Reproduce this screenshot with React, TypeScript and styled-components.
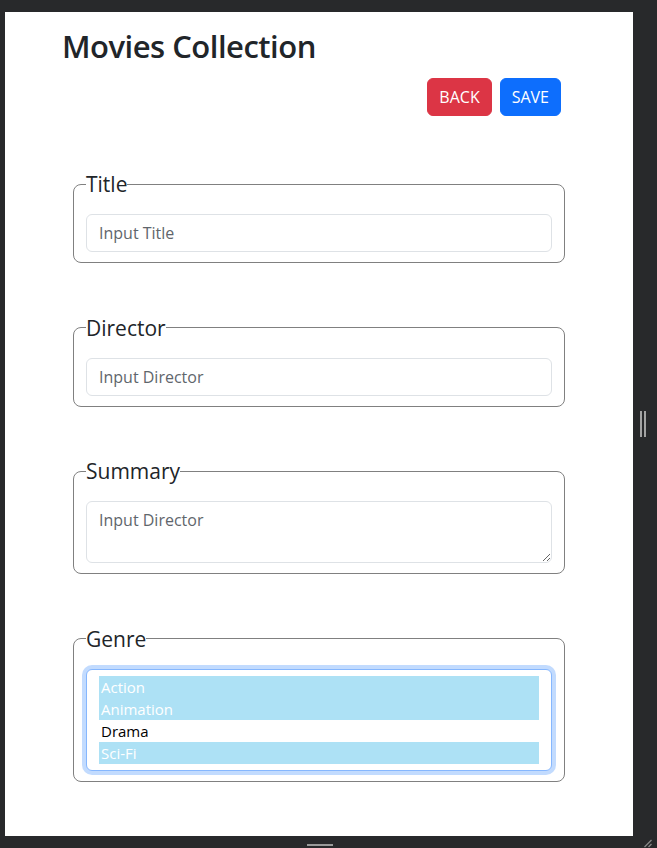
import React from "react";
import styled, { createGlobalStyle } from "styled-components";

const Global = createGlobalStyle`
  html, body { margin: 0; padding: 0; background: #28292b; }
  body { font-family: "Open Sans", "Noto Sans", sans-serif; color: #212529; }
  *, *::before, *::after { box-sizing: border-box; }
`;

const Frame = styled.div`
  width: 657px;
  height: 848px;
  background: #28292b;
  padding: 12px 0 0 5px;
  display: grid;
  grid-template-columns: 628px 1fr;
  grid-template-rows: 824px 1fr;
  overflow: hidden;
`;

const Page = styled.main`
  background: #fff;
  padding-top: 15px;
  display: flex;
  flex-direction: column;
`;

const Title = styled.h1`
  margin: 0;
  padding-left: 57px;
  font-size: 31px;
  font-weight: 600;
  letter-spacing: -0.5px;
  line-height: 38px;
  color: #212529;
`;

const Actions = styled.div`
  display: flex;
  justify-content: flex-end;
  gap: 8px;
  padding-right: 72px;
  margin-top: 13px;
`;

const Button = styled.button<{ $variant: "danger" | "primary" }>`
  height: 38px;
  padding: 0 11px;
  border: 1px solid ${(p) => (p.$variant === "danger" ? "#dc3545" : "#0d6efd")};
  background: ${(p) => (p.$variant === "danger" ? "#dc3545" : "#0d6efd")};
  color: #fff;
  font-family: inherit;
  font-size: 16px;
  line-height: 1.5;
  border-radius: 6px;
  cursor: pointer;
`;

const Form = styled.form`
  display: flex;
  flex-direction: column;
  gap: 51.5px;
  padding: 0 68px;
  margin-top: 55px;
`;

const Fieldset = styled.fieldset`
  margin: 0;
  min-width: 0;
  border: 1px solid #808080;
  border-radius: 8px;
  padding: 17px 12px 10px;
`;

const Legend = styled.legend`
  padding: 0;
  margin: 0;
  font-size: 21px;
  line-height: 26px;
  color: #212529;
`;

const Input = styled.input`
  display: block;
  width: 100%;
  height: 38px;
  padding: 6px 12px;
  font-family: inherit;
  font-size: 16px;
  line-height: 1.5;
  color: #212529;
  background: #fff;
  border: 1px solid #dee2e6;
  border-radius: 6px;
  outline: none;
  &::placeholder { color: #5f666c; }
`;

const TextArea = styled.textarea`
  display: block;
  width: 100%;
  height: 62px;
  padding: 6px 12px;
  font-family: inherit;
  font-size: 16px;
  line-height: 1.5;
  color: #212529;
  background: #fff;
  border: 1px solid #dee2e6;
  border-radius: 6px;
  outline: none;
  resize: vertical;
  &::placeholder { color: #5f666c; }
`;

const ListBox = styled.div`
  border: 1px solid #86b7fe;
  border-radius: 6px;
  box-shadow: 0 0 0 4px rgba(13, 110, 253, 0.25);
  padding: 6px 12px;
  background: #fff;
`;

const OptionRow = styled.div<{ $selected: boolean }>`
  height: 22px;
  padding: 0 2px;
  font-size: 15px;
  line-height: 22px;
  background: ${(p) => (p.$selected ? "#ade1f5" : "transparent")};
  color: ${(p) => (p.$selected ? "#fff" : "#000")};
`;

const RightGutter = styled.div`
  display: flex;
  align-items: center;
  gap: 2px;
  padding-left: 7px;
`;

const GripBar = styled.span`
  width: 2px;
  height: 26px;
  background: #a3a3a3;
`;

const BottomGutter = styled.div`
  display: flex;
  justify-content: center;
  padding-top: 8px;
  padding-left: 1px;
`;

const BottomBar = styled.span`
  width: 26px;
  height: 2px;
  background: #9a9a9a;
`;

const Corner = styled.div`
  display: flex;
`;

const genres = [
  { name: "Action", selected: true },
  { name: "Animation", selected: true },
  { name: "Drama", selected: false },
  { name: "Sci-Fi", selected: true },
];

export default function App() {
  return (
    <>
      <Global />
      <Frame>
        <Page>
          <Title>Movies Collection</Title>
          <Actions>
            <Button type="button" $variant="danger">BACK</Button>
            <Button type="button" $variant="primary">SAVE</Button>
          </Actions>
          <Form onSubmit={(e) => e.preventDefault()}>
            <Fieldset>
              <Legend>Title</Legend>
              <Input placeholder="Input Title" />
            </Fieldset>
            <Fieldset>
              <Legend>Director</Legend>
              <Input placeholder="Input Director" />
            </Fieldset>
            <Fieldset>
              <Legend>Summary</Legend>
              <TextArea placeholder="Input Director" />
            </Fieldset>
            <Fieldset>
              <Legend>Genre</Legend>
              <ListBox role="listbox" aria-multiselectable="true">
                {genres.map((g) => (
                  <OptionRow key={g.name} role="option" aria-selected={g.selected} $selected={g.selected}>
                    {g.name}
                  </OptionRow>
                ))}
              </ListBox>
            </Fieldset>
          </Form>
        </Page>
        <RightGutter>
          <GripBar />
          <GripBar />
        </RightGutter>
        <BottomGutter>
          <BottomBar />
        </BottomGutter>
        <Corner>
          <svg width="24" height="12" viewBox="0 0 24 12">
            <line x1="18.5" y1="4" x2="11.5" y2="11" stroke="#8a8a8a" strokeWidth="1.2" />
            <line x1="18.5" y1="8" x2="15.5" y2="11" stroke="#8a8a8a" strokeWidth="1.2" />
          </svg>
        </Corner>
      </Frame>
    </>
  );
}
